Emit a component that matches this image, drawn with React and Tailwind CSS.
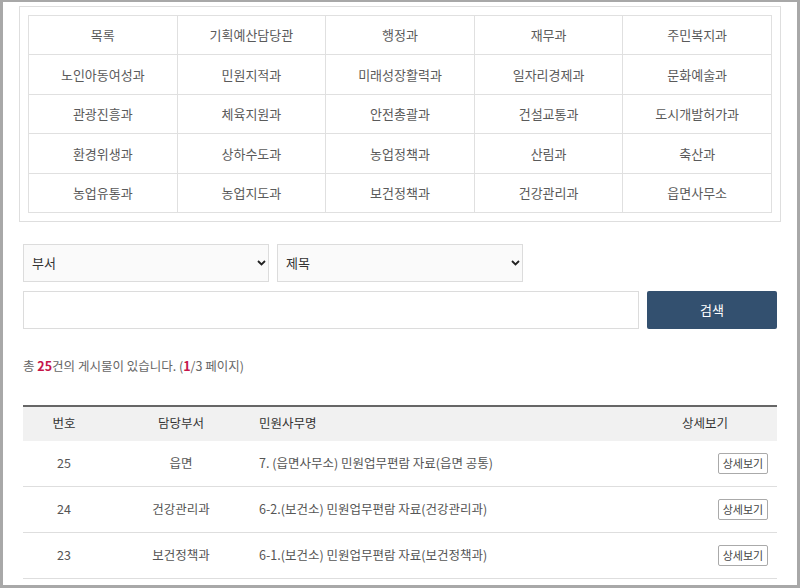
import React from "react";

const depts = [
  "목록", "기획예산담당관", "행정과", "재무과", "주민복지과",
  "노인아동여성과", "민원지적과", "미래성장활력과", "일자리경제과", "문화예술과",
  "관광진흥과", "체육지원과", "안전총괄과", "건설교통과", "도시개발허가과",
  "환경위생과", "상하수도과", "농업정책과", "산림과", "축산과",
  "농업유통과", "농업지도과", "보건정책과", "건강관리과", "읍면사무소",
];

const rows = [
  { no: 25, dept: "읍면", title: "7. (읍면사무소) 민원업무편람 자료(읍면 공통)" },
  { no: 24, dept: "건강관리과", title: "6-2.(보건소) 민원업무편람 자료(건강관리과)" },
  { no: 23, dept: "보건정책과", title: "6-1.(보건소) 민원업무편람 자료(보건정책과)" },
];

function Chevron() {
  return (
    <svg width="9" height="6" viewBox="0 0 9 6" className="text-[#222]">
      <path d="M1 1l3.5 3.5L8 1" fill="none" stroke="currentColor" strokeWidth="1.8" />
    </svg>
  );
}

function FakeSelect({ label }) {
  return (
    <div className="flex h-[38px] w-[246px] items-center justify-between border border-[#dcdcdc] bg-[#fafafa] pl-[8px] pr-[2px] text-[13px] text-[#333]">
      <span>{label}</span>
      <Chevron />
    </div>
  );
}

export default function App() {
  return (
    <div
      className="h-[588px] w-[800px] overflow-hidden border-x-[3px] border-t-[2px] border-b-[3px] border-[#a8a8a8] bg-white"
      style={{ fontFamily: '"Noto Sans CJK KR", "Noto Sans", sans-serif' }}
    >
      <div className="mx-[16px] mt-[4px] border border-[#dedede] p-[8px]">
        <div className="grid grid-cols-5 border-l border-t border-[#e0e0e0]">
          {depts.map((d) => (
            <div
              key={d}
              className="flex h-[39.4px] items-center justify-center border-b border-r border-[#e0e0e0] text-[13px] text-[#5a5a5a]"
            >
              {d}
            </div>
          ))}
        </div>
      </div>

      <div className="px-[20px]">
        <div className="mt-[22px] flex gap-[8px]">
          <FakeSelect label="부서" />
          <FakeSelect label="제목" />
        </div>
        <div className="mt-[9px] flex gap-[8px]">
          <div className="h-[38px] flex-1 border border-[#dcdcdc] bg-white" />
          <button className="h-[38px] w-[130px] rounded-[2px] bg-[#33506f] text-[13px] text-white">
            검색
          </button>
        </div>

        <p className="mt-[28px] text-[12.5px] text-[#666]">
          총 <b className="text-[#c5164a]">25</b>건의 게시물이 있습니다. (<b className="text-[#c5164a]">1</b>/3 페이지)
        </p>

        <table className="mt-[29px] w-full border-collapse border-t-2 border-[#666] text-[12.5px]">
          <thead>
            <tr className="h-[35px] bg-[#f1f1f1] text-[#333]">
              <th className="w-[82px] font-normal">번호</th>
              <th className="w-[152px] font-normal">담당부서</th>
              <th className="pl-[2px] text-left font-normal">민원사무명</th>
              <th className="w-[144px] font-normal">상세보기</th>
            </tr>
          </thead>
          <tbody>
            {rows.map((r) => (
              <tr key={r.no} className="h-[46px] border-b border-[#dedede] text-[#555]">
                <td className="text-center">{r.no}</td>
                <td className="text-center">{r.dept}</td>
                <td className="pl-[2px]">{r.title}</td>
                <td className="pr-[9px] text-right">
                  <button className="h-[21px] w-[50px] rounded-[2px] border border-[#aaa] bg-white text-[11px] text-[#444]">
                    상세보기
                  </button>
                </td>
              </tr>
            ))}
          </tbody>
        </table>
      </div>
    </div>
  );
}
